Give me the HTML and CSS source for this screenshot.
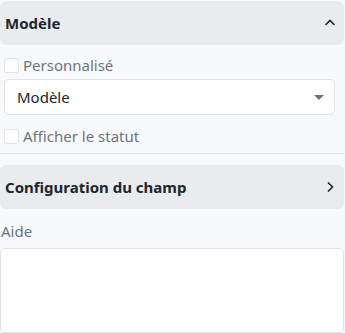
FILE: index.html
```html
<!DOCTYPE html>
<html lang="fr">
<head>
<meta charset="utf-8">
<link rel="stylesheet" href="styles.css">
</head>
<body>
<div class="page">
  <div class="acc-header">
    <span class="acc-title">Modèle</span>
    <svg class="chev" width="14" height="14" viewBox="0 0 14 14"><path d="M2.5 9 L7 4.5 L11.5 9" fill="none" stroke="#212529" stroke-width="1.6"/></svg>
  </div>
  <div class="acc-body">
    <label class="check"><span class="box"></span><span>Personnalisé</span></label>
    <div class="select"><span>Modèle</span><span class="caret"></span></div>
    <label class="check check2"><span class="box"></span><span>Afficher le statut</span></label>
  </div>
  <div class="sep"></div>
  <div class="acc-header acc2">
    <span class="acc-title">Configuration du champ</span>
    <svg class="chev" width="14" height="14" viewBox="0 0 14 14"><path d="M5 2.5 L9.5 7 L5 11.5" fill="none" stroke="#212529" stroke-width="1.6"/></svg>
  </div>
  <div class="field-label">Aide</div>
  <div class="textarea"></div>
</div>
</body>
</html>
```
FILE: styles.css
```css
html, body {
  margin: 0;
  padding: 0;
  background: #f8f9fa;
}
body {
  font-family: "Noto Sans", "DejaVu Sans", sans-serif;
  color: #212529;
}
.page {
  width: 344px;
  padding-top: 1px;
}
.acc-header {
  height: 44px;
  background: #e9ecef;
  border-radius: 6px;
  display: flex;
  align-items: center;
  justify-content: space-between;
  padding: 0 7px 0 5px;
}
.acc-title {
  font-weight: 700;
  font-size: 15px;
}
.chev {
  display: block;
}
.acc-body {
  padding: 11px 9px 0 4px;
}
.check {
  display: flex;
  align-items: center;
  gap: 4px;
  font-size: 15px;
  color: #6c757d;
  height: 18px;
}
.box {
  width: 13px;
  height: 13px;
  border: 1px solid #dee2e6;
  border-radius: 3px;
  background: #fff;
}
.select {
  margin-top: 5px;
  height: 34px;
  background: #fff;
  border: 1px solid #dee2e6;
  border-radius: 5px;
  display: flex;
  align-items: center;
  justify-content: space-between;
  padding: 0 10px 0 12px;
  font-size: 15px;
  color: #212529;
}
.caret {
  width: 0;
  height: 0;
  border-left: 5px solid transparent;
  border-right: 5px solid transparent;
  border-top: 5px solid #6c757d;
}
.check2 {
  margin-top: 12px;
}
.sep {
  margin-top: 8px;
  height: 1px;
  background: #dee2e6;
}
.acc2 {
  margin-top: 11px;
}
.field-label {
  margin-top: 12px;
  padding-left: 1px;
  font-size: 15px;
  color: #6c757d;
  height: 20px;
}
.textarea {
  margin-top: 7px;
  height: 83px;
  background: #fff;
  border: 1px solid #dee2e6;
  border-radius: 5px;
}
```
